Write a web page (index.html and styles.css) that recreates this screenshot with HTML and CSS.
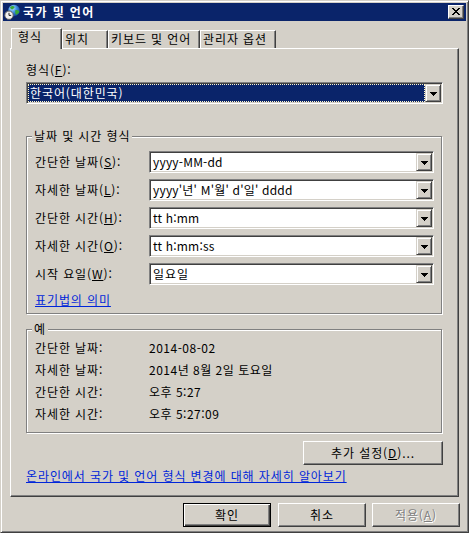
FILE: index.html
```html
<!DOCTYPE html>
<html lang="ko">
<head>
<meta charset="utf-8">
<title>국가 및 언어</title>
<link rel="stylesheet" href="styles.css">
</head>
<body>
<div class="window">
  <div class="titlebar">
    <svg class="app-icon" viewBox="0 0 16 16" width="16" height="16">
      <defs>
        <radialGradient id="globe" cx="0.35" cy="0.3" r="0.75">
          <stop offset="0" stop-color="#bfe6ff"/>
          <stop offset="0.5" stop-color="#3f8fe0"/>
          <stop offset="1" stop-color="#103f9a"/>
        </radialGradient>
      </defs>
      <circle cx="10" cy="6.5" r="5.8" fill="url(#globe)"/>
      <path d="M6 3.2 C7.5 1.8 9.5 1.8 10.5 2.8 C10.8 4.2 9.2 4.8 8.3 5.4 C7.4 5.6 6.4 4.6 6 3.2 Z M11.5 6 C13.5 5.6 15 6.4 15.4 7.8 C14.8 9.6 13.2 10.6 12 10.8 C11.2 9.4 10.9 7.4 11.5 6 Z" fill="#38a838"/>
      <circle cx="5" cy="11.2" r="4.2" fill="#f2f2f2" stroke="#5b5b5b" stroke-width="1"/>
      <path d="M5 8.8 V11.4 H7.2" stroke="#202020" stroke-width="1" fill="none"/>
    </svg>
    <span class="title">국가 및 언어</span>
    <div class="close-btn">
      <svg width="8" height="7" viewBox="0 0 8 7" shape-rendering="crispEdges">
        <path d="M0 0h2v1h-2z M6 0h2v1h-2z M1 1h2v1h-2z M5 1h2v1h-2z M2 2h4v1h-4z M3 3h2v1h-2z M2 4h4v1h-4z M1 5h2v1h-2z M5 5h2v1h-2z M0 6h2v1h-2z M6 6h2v1h-2z" fill="#000"/>
      </svg>
    </div>
  </div>

  <div class="client">
    <div class="tabs">
      <div class="tab active tab-format">형식</div>
      <div class="tab tab-location">위치</div>
      <div class="tab tab-keyboard">키보드 및 언어</div>
      <div class="tab tab-admin">관리자 옵션</div>
    </div>

    <div class="panel">
      <div class="field-label">형식(<u>F</u>):</div>
      <div class="combo combo-main">
        <div class="combo-value selected">한국어(대한민국)</div>
        <div class="drop-btn">
          <svg width="7" height="4" viewBox="0 0 7 4" shape-rendering="crispEdges"><path d="M0 0h7v1h-7z M1 1h5v1h-5z M2 2h3v1h-3z M3 3h1v1h-1z" fill="#000"/></svg>
        </div>
      </div>

      <div class="group group-formats">
        <div class="group-title">날짜 및 시간 형식</div>
        <div class="rows">
          <div class="form-row">
            <span class="row-label">간단한 날짜(<u>S</u>):</span>
            <div class="combo">
              <div class="combo-value latin">yyyy-MM-dd</div>
              <div class="drop-btn"><svg width="7" height="4" viewBox="0 0 7 4" shape-rendering="crispEdges"><path d="M0 0h7v1h-7z M1 1h5v1h-5z M2 2h3v1h-3z M3 3h1v1h-1z" fill="#000"/></svg></div>
            </div>
          </div>
          <div class="form-row">
            <span class="row-label">자세한 날짜(<u>L</u>):</span>
            <div class="combo">
              <div class="combo-value latin">yyyy'년' M'월' d'일' dddd</div>
              <div class="drop-btn"><svg width="7" height="4" viewBox="0 0 7 4" shape-rendering="crispEdges"><path d="M0 0h7v1h-7z M1 1h5v1h-5z M2 2h3v1h-3z M3 3h1v1h-1z" fill="#000"/></svg></div>
            </div>
          </div>
          <div class="form-row">
            <span class="row-label">간단한 시간(<u>H</u>):</span>
            <div class="combo">
              <div class="combo-value latin">tt h:mm</div>
              <div class="drop-btn"><svg width="7" height="4" viewBox="0 0 7 4" shape-rendering="crispEdges"><path d="M0 0h7v1h-7z M1 1h5v1h-5z M2 2h3v1h-3z M3 3h1v1h-1z" fill="#000"/></svg></div>
            </div>
          </div>
          <div class="form-row">
            <span class="row-label">자세한 시간(<u>O</u>):</span>
            <div class="combo">
              <div class="combo-value latin">tt h:mm:ss</div>
              <div class="drop-btn"><svg width="7" height="4" viewBox="0 0 7 4" shape-rendering="crispEdges"><path d="M0 0h7v1h-7z M1 1h5v1h-5z M2 2h3v1h-3z M3 3h1v1h-1z" fill="#000"/></svg></div>
            </div>
          </div>
          <div class="form-row">
            <span class="row-label">시작 요일(<u>W</u>):</span>
            <div class="combo">
              <div class="combo-value">일요일</div>
              <div class="drop-btn"><svg width="7" height="4" viewBox="0 0 7 4" shape-rendering="crispEdges"><path d="M0 0h7v1h-7z M1 1h5v1h-5z M2 2h3v1h-3z M3 3h1v1h-1z" fill="#000"/></svg></div>
            </div>
          </div>
        </div>
        <a class="link link-notation" href="#">표기법의 의미</a>
      </div>

      <div class="group group-examples">
        <div class="group-title">예</div>
        <div class="example-row"><span>간단한 날짜:</span><span class="example-value">2014-08-02</span></div>
        <div class="example-row"><span>자세한 날짜:</span><span class="example-value">2014년 8월 2일 토요일</span></div>
        <div class="example-row"><span>간단한 시간:</span><span class="example-value">오후 5:27</span></div>
        <div class="example-row"><span>자세한 시간:</span><span class="example-value">오후 5:27:09</span></div>
      </div>

      <div class="more-row">
        <div class="btn btn-more">추가 설정(<u>D</u>)...</div>
      </div>

      <a class="link link-online" href="#">온라인에서 국가 및 언어 형식 변경에 대해 자세히 알아보기</a>
    </div>

    <div class="dialog-buttons">
      <div class="btn btn-default">확인</div>
      <div class="btn">취소</div>
      <div class="btn btn-disabled">적용(<u>A</u>)</div>
    </div>
  </div>
</div>
</body>
</html>
```

FILE: styles.css
```css
* {
  box-sizing: border-box;
}

html,
body {
  margin: 0;
  padding: 0;
}

body {
  width: 469px;
  height: 533px;
  overflow: hidden;
  background: #d4d0c8;
  font-family: "Noto Sans CJK KR", "Noto Sans", sans-serif;
  font-size: 12px;
  letter-spacing: 0.9px;
  color: #000;
}

u {
  text-decoration: underline;
  text-underline-offset: 1px;
}

/* window frame */
.window {
  width: 469px;
  height: 533px;
  display: flex;
  flex-direction: column;
  padding: 2px;
  background: #d4d0c8;
  border: 1px solid;
  border-color: #d4d0c8 #404040 #404040 #d4d0c8;
  box-shadow: inset 1px 1px #fff, inset -1px -1px #808080;
}

/* title bar */
.titlebar {
  flex: none;
  height: 18px;
  margin-bottom: 1px;
  display: flex;
  align-items: center;
  padding: 0 2px 0 1px;
  background: #0a246a;
  color: #fff;
}

.app-icon {
  flex: none;
  width: 16px;
  height: 16px;
}

.title {
  flex: 1;
  margin-left: 3px;
  font-weight: bold;
  line-height: 18px;
  letter-spacing: 1.4px;
}

.close-btn {
  flex: none;
  width: 16px;
  height: 14px;
  display: flex;
  align-items: center;
  justify-content: center;
  padding: 0 1px 1px 0;
  background: #d4d0c8;
  border: 1px solid;
  border-color: #fff #404040 #404040 #fff;
  box-shadow: inset -1px -1px #808080;
}

.close-btn svg {
  display: block;
}

/* client area */
.client {
  flex: 1;
  display: flex;
  flex-direction: column;
  padding: 6px 7px 3px 7px;
}

/* tabs */
.tabs {
  position: relative;
  z-index: 1;
  flex: none;
  height: 21px;
  margin-bottom: -1px;
  padding-left: 1px;
  display: flex;
  align-items: flex-end;
}

.tab {
  height: 18px;
  margin-bottom: 1px;
  padding-left: 2px;
  line-height: 16px;
  white-space: nowrap;
  background: #d4d0c8;
  border: 1px solid;
  border-bottom: none;
  border-color: #fff #404040 transparent #fff;
  box-shadow: inset -1px 0 #808080;
}

.tab.active {
  height: 21px;
  margin-bottom: 0;
  padding-left: 6px;
  line-height: 16px;
}

.tab-format {
  width: 51px;
}

.tab-location {
  width: 46px;
}

.tab-keyboard {
  width: 92px;
}

.tab-admin {
  width: 76px;
}

/* tab page */
.panel {
  flex: none;
  height: 449px;
  display: flex;
  flex-direction: column;
  padding: 13px 15px 0 15px;
  border: 1px solid;
  border-color: #fff #404040 #404040 #fff;
  box-shadow: inset -1px -1px #808080;
}

.field-label {
  line-height: 16px;
  height: 16px;
}

/* combo boxes */
.combo {
  height: 22px;
  display: flex;
  padding: 1px;
  background: #fff;
  border: 1px solid;
  border-color: #808080 #fff #fff #808080;
  box-shadow: inset 1px 1px #404040, inset -1px -1px #d4d0c8;
}

.combo-main {
  margin-top: 4px;
}

.combo-value {
  flex: 1;
  min-width: 0;
  padding-left: 2px;
  line-height: 18px;
  white-space: nowrap;
  overflow: hidden;
}

.combo-value.latin {
  letter-spacing: 0.2px;
}

.combo-value.selected {
  background: #0a246a;
  color: #fff;
  outline: 1px dotted #fff6c8;
  outline-offset: -1px;
}

.drop-btn {
  flex: none;
  width: 16px;
  height: 18px;
  display: flex;
  align-items: center;
  justify-content: center;
  padding-top: 1px;
  background: #d4d0c8;
  border: 1px solid;
  border-color: #d4d0c8 #404040 #404040 #d4d0c8;
  box-shadow: inset 1px 1px #fff, inset -1px -1px #808080;
}

.drop-btn svg {
  display: block;
}

/* group boxes */
.group {
  position: relative;
  margin-right: 1px;
  border: 1px solid #808080;
  box-shadow: inset 1px 1px #fff, 1px 1px #fff;
}

.group-title {
  position: absolute;
  top: -9px;
  left: 5px;
  padding: 0 2px;
  line-height: 16px;
  background: #d4d0c8;
}

.group-formats {
  margin-top: 32px;
  padding: 14px 7px 5px 8px;
}

.rows {
  display: flex;
  flex-direction: column;
  gap: 6px;
}

.form-row {
  display: grid;
  grid-template-columns: 114px 1fr;
  align-items: center;
  height: 22px;
}

.row-label {
  white-space: nowrap;
  line-height: 16px;
}

.link {
  display: block;
  align-self: flex-start;
  color: #0026d9;
  text-decoration: underline;
  text-underline-offset: 1px;
  line-height: 16px;
  white-space: nowrap;
}

.link-notation {
  margin-top: 7px;
}

.group-examples {
  margin-top: 15px;
  padding: 7px 7px 7px 8px;
}

.example-row {
  display: grid;
  grid-template-columns: 114px 1fr;
  line-height: 22px;
  height: 22px;
  white-space: nowrap;
}

.example-value {
  letter-spacing: 0.5px;
}

/* buttons */
.btn {
  width: 88px;
  height: 24px;
  display: flex;
  align-items: center;
  justify-content: center;
  line-height: 16px;
  white-space: nowrap;
  background: #d4d0c8;
  border: 1px solid;
  border-color: #fff #404040 #404040 #fff;
  box-shadow: inset -1px -1px #808080;
}

.btn-default {
  border-color: #000;
  box-shadow: inset 1px 1px #fff, inset -1px -1px #404040, inset -2px -2px #808080;
}

.btn-disabled {
  color: #808080;
  text-shadow: 1px 1px #fff;
}

.more-row {
  display: flex;
  justify-content: flex-end;
  margin-top: 8px;
}

.btn-more {
  width: 140px;
}

.link-online {
  margin-top: 3px;
}

.dialog-buttons {
  flex: none;
  display: flex;
  justify-content: flex-end;
  gap: 6px;
  margin-top: 6px;
  margin-right: -1px;
}

.dialog-buttons .btn-default {
  margin-right: 1px;
}
```
